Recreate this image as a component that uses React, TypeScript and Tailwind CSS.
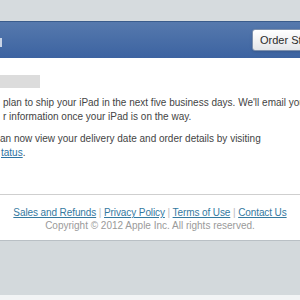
export default function App() {
  return (
    <div className="w-[300px] h-[300px] overflow-hidden bg-[#d3d9dc] flex flex-col font-['Liberation_Sans',Arial,sans-serif]">
      <div className="h-[21px] shrink-0 bg-[#d6dbde]" />

      <div className="h-[37px] shrink-0 border-t border-[#3a5c8c] bg-gradient-to-b from-[#5679ad] to-[#3c63a1] flex items-center relative overflow-hidden">
        <div className="absolute left-0 top-[16px] w-[2px] h-[9px] bg-[#c9d4e6]" />
        <div className="pl-[252px] flex shrink-0">
          <button className="shrink-0 whitespace-nowrap h-[22px] pl-[7px] pr-[8px] rounded-[3px] border border-[#7d90ad] bg-gradient-to-b from-[#ffffff] to-[#e4e6e9] text-[11px] text-[#2b2b2b] leading-none shadow-sm">
            Order Status
          </button>
        </div>
      </div>

      <div className="h-[183px] shrink-0 bg-white border-b border-[#b9c0c5] flex flex-col">
        <div className="mt-[17px] w-[40px] h-[13px] bg-[#dcdcdc]" />

        <div className="mt-[8px] pl-[3px] text-[10px] leading-[14px] text-[#444] whitespace-nowrap">
          <p>plan to ship your iPad in the next five business days. We'll email you</p>
          <p>r information once your iPad is on the way.</p>
          <p className="mt-[8px] -ml-[3px]">an now view your delivery date and order details by visiting</p>
          <p className="-ml-[2px]">
            <a className="text-[#2b73a3] underline">tatus</a>.
          </p>
        </div>

        <div className="mt-[34px] h-px bg-[#cfcfcf]" />

        <div className="mt-[11px] flex flex-col items-center text-[10px] leading-[13px] whitespace-nowrap">
          <div className="text-[#bbb] tracking-[-0.1px]">
            <a className="text-[#34799f] underline">Sales and Refunds</a> |{' '}
            <a className="text-[#34799f] underline">Privacy Policy</a> |{' '}
            <a className="text-[#34799f] underline">Terms of Use</a> |{' '}
            <a className="text-[#34799f] underline">Contact Us</a>
          </div>
          <div className="text-[#9a9a9a]">Copyright © 2012 Apple Inc. All rights reserved.</div>
        </div>
      </div>

      <div className="flex-1" />
      <div className="h-[5px] shrink-0 bg-[#f2f4f5]" />
    </div>
  );
}
